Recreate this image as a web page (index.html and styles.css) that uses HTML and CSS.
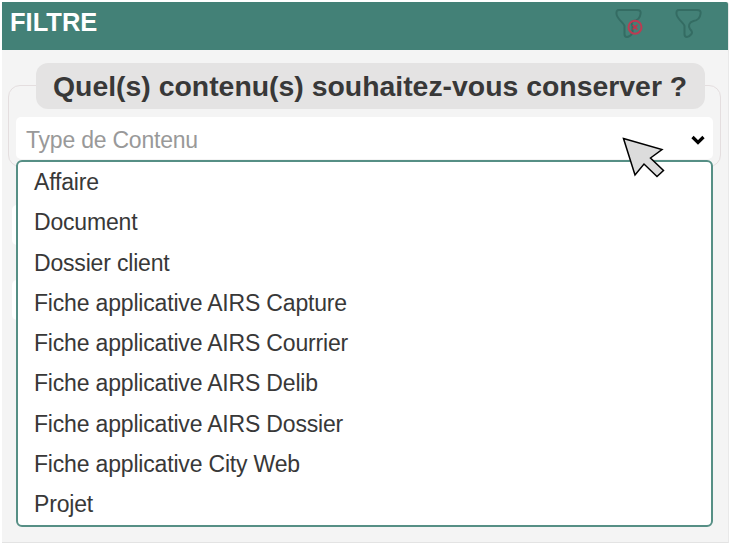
FILE: index.html
```
<!DOCTYPE html>
<html lang="fr">
<head>
<meta charset="utf-8">
<title>Filtre</title>
<link rel="stylesheet" href="styles.css">
</head>
<body>
<main class="panel">
  <header class="panel-header">
    <h1 class="panel-title"><span>FILTRE</span></h1>
    <div class="actions">
      <svg class="icon" width="28" height="32" viewBox="0 0 28 32" fill="none">
        <path class="funnel" d="M4 2H22Q26.500 2 25.500 6C25 10 22.500 12.500 18.500 13Q15.500 14.500 17.500 18V25Q15 29 12 29Q9.500 29 9.500 26V18C9 15 2 11 1.500 6Q1 2 4 2Z"/>
        <circle class="clear-ring" cx="20" cy="19.200" r="6.500"/>
        <path class="clear-cross" d="M17.700 16.900l4.600 4.600M22.300 16.900l-4.600 4.600"/>
      </svg>
      <svg class="icon" width="28" height="32" viewBox="0 0 28 32" fill="none">
        <path class="funnel" d="M4 2H22Q26.500 2 25.500 6C25 10 22.500 12.500 18.500 13C14 14 13 18 15 21Q18 24 16.500 26Q14 29 12 29Q9.500 29 9.500 26V18C9 15 2 11 1.500 6Q1 2 4 2Z"/>
      </svg>
    </div>
  </header>
  <div class="panel-body">
    <section class="group">
      <h2 class="legend"><span>Quel(s) contenu(s) souhaitez-vous conserver ?</span></h2>
      <div class="select">
        <span class="placeholder">Type de Contenu</span>
        <svg class="chevron" width="14" height="10" viewBox="0 0 14 10" fill="none"><path d="M1.500 2L7 7.500L12.500 2"/></svg>
      </div>
      <ul class="menu">
        <li><span>Affaire</span></li>
        <li><span>Document</span></li>
        <li><span>Dossier client</span></li>
        <li><span>Fiche applicative AIRS Capture</span></li>
        <li><span>Fiche applicative AIRS Courrier</span></li>
        <li><span>Fiche applicative AIRS Delib</span></li>
        <li><span>Fiche applicative AIRS Dossier</span></li>
        <li><span>Fiche applicative City Web</span></li>
        <li><span>Projet</span></li>
      </ul>
    </section>
    <div class="field"></div>
    <div class="field"></div>
  </div>
  <svg class="pointer" width="44" height="42" viewBox="0 0 44 42"><path d="M3.500 3.500L42 14.500L30.500 23L43.500 35.500L37 41.500L24 29L15 40Z" transform="translate(0 0)"/></svg>
</main>
</body>
</html>
```

FILE: styles.css
```
* { box-sizing: border-box; }

body {
  margin: 0;
  padding: 2px;
  background: #fff;
  color: #383838;
  font-family: "Liberation Sans", Arial, sans-serif;
}

h1, h2, ul { margin: 0; padding: 0; }

.panel {
  position: relative;
  width: 727px;
  height: 541px;
  background: #f4f4f4;
  border-right: 1px solid #e9e9e9;
  border-bottom: 1px solid #e3e3e3;
  border-radius: 0 3px 0 0;
}

.panel-header {
  display: flex;
  justify-content: space-between;
  width: 726px;
  height: 48px;
  padding: 6px 25px 0 8px;
  background: #438177;
  border-radius: 0 2px 0 0;
}

.panel-title {
  color: #fff;
  font-size: 25.5px;
  line-height: 29px;
}

.actions { display: flex; gap: 32px; }
.icon { display: block; }
.funnel { stroke: #346c63; stroke-width: 2; stroke-linejoin: round; }
.clear-ring { stroke: #bd3b52; stroke-width: 2; }
.clear-cross { stroke: #c4324b; stroke-width: 1.6; }

.panel-body { padding: 35px 7px 0 6px; }

.group {
  position: relative;
  height: 82px;
  padding: 0 7px;
  border: 1px solid #e4dedf;
  border-radius: 12px;
}

.legend {
  width: 669px;
  height: 46px;
  margin: -23px 0 8px 20px;
  padding-left: 17px;
  background: #e4e3e3;
  border-radius: 12px;
  font-size: 28.4px;
  line-height: 46px;
  white-space: nowrap;
}

.select {
  display: flex;
  align-items: center;
  justify-content: space-between;
  width: 697px;
  height: 42px;
  padding: 4px 8px 0 10px;
  background: #fff;
  border-radius: 5px;
}

.placeholder { color: #999; font-size: 23px; letter-spacing: -0.22px; }
.chevron path { stroke: #000; stroke-width: 3.2; }

.menu {
  position: absolute;
  z-index: 1;
  top: 74px;
  left: 7px;
  width: 697px;
  height: 367px;
  background: #fff;
  border: 2px solid #568f85;
  border-radius: 6px;
  list-style: none;
}

.menu li {
  height: 40.3px;
  padding-left: 16px;
  font-size: 23px;
  line-height: 40px;
  letter-spacing: -0.18px;
  white-space: nowrap;
}

.field {
  height: 40px;
  margin: 38px 10px 0 4px;
  background: #fff;
  border-radius: 5px;
}

.field + .field { margin-top: 35px; }

.pointer { position: absolute; z-index: 2; top: 133px; left: 618px; overflow: visible; }
.pointer path { fill: #dcdcdc; stroke: #000; stroke-width: 1.5; }
```
